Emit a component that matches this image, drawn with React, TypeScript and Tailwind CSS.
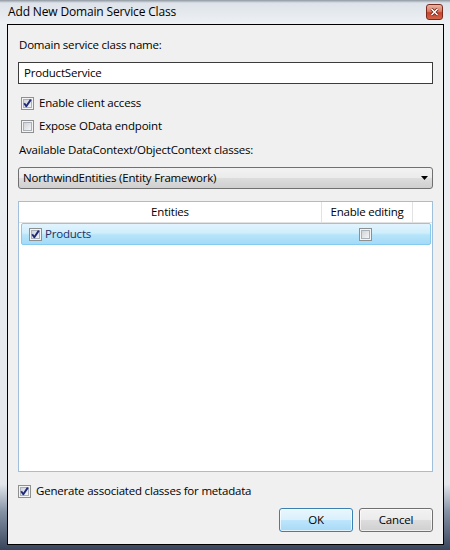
import React from 'react';

const font = { fontFamily: '"Segoe UI", "Open Sans", sans-serif' };
const txt = 'text-[11.5px] tracking-[-0.2px]';

function CheckBox({ checked }: { checked?: boolean }) {
  return (
    <svg width="13" height="13" viewBox="0 0 13 13" className="shrink-0">
      <defs>
        <linearGradient id="cbg" x1="0" y1="0" x2="1" y2="1">
          <stop offset="0" stopColor="#cdd1d7" />
          <stop offset="1" stopColor="#f7f7f7" />
        </linearGradient>
      </defs>
      <rect x="0.5" y="0.5" width="12" height="12" fill="#f4f4f4" stroke="#8e8f8f" />
      <rect x="2.5" y="2.5" width="8" height="8" fill="url(#cbg)" stroke="#aab0b8" />
      {checked && (
        <path d="M3.2 6.2 L5.3 9.3 L9.8 2.6" fill="none" stroke="#1f2a7a" strokeWidth="1.9" strokeLinejoin="round" />
      )}
    </svg>
  );
}

function CheckRow({ checked, label, className = '' }: { checked?: boolean; label: string; className?: string }) {
  return (
    <div className={`flex items-center h-4 ${className}`}>
      <CheckBox checked={checked} />
      <span className={`ml-[5px] ${txt} leading-4 text-black`}>{label}</span>
    </div>
  );
}

export default function App() {
  return (
    <div
      className="w-[450px] h-[550px] flex flex-col bg-[linear-gradient(to_bottom,#8e969f_0px,#dde3ea_3px,#eef1f4_24px,#e3e7ec_88%,#8592a5_93%,#37445b_100%)]"
      style={font}
    >
      {/* title bar */}
      <div className="h-[24px] flex items-center pl-2 pr-[7px] shrink-0">
        <span className="text-[12px] tracking-[-0.15px] text-black">Add New Domain Service Class</span>
        <div className="ml-auto w-[17px] h-[16px] rounded-[3px] border border-[#7a2a1d] bg-[linear-gradient(to_bottom,#eab3a3_0%,#dc7d66_45%,#c8432c_55%,#d0654a_100%)] flex items-center justify-center">
          <svg width="9" height="8" viewBox="0 0 9 8">
            <path d="M1.5 1 L7.5 7 M7.5 1 L1.5 7" stroke="#5a1a10" strokeWidth="3" />
            <path d="M1.5 1 L7.5 7 M7.5 1 L1.5 7" stroke="#ffffff" strokeWidth="1.6" />
          </svg>
        </div>
      </div>

      {/* client area */}
      <div className="ml-[7px] mr-[6px] mb-[5px] flex-1 border border-black bg-[#f0f0f0] flex flex-col px-[10px] pt-[12px] pb-[12px]">
        <div className={`${txt} leading-4 text-black ml-[1px]`}>Domain service class name:</div>

        <div className={`mt-[9px] h-[22px] border border-[#3c3c3c] bg-white flex items-center pl-[5px] ${txt} text-black`}>
          ProductService
        </div>

        <CheckRow checked label="Enable client access" className="mt-[11px] ml-[3px]" />
        <CheckRow label="Expose OData endpoint" className="mt-[7px] ml-[3px]" />

        <div className={`mt-[8px] ${txt} leading-4 text-black ml-[1px]`}>
          Available DataContext/ObjectContext classes:
        </div>

        <div className={`mt-[9px] h-[22px] rounded-[3px] border border-[#707070] bg-[linear-gradient(to_bottom,#f2f2f2_0%,#ebebeb_50%,#dddddd_50%,#cfcfcf_100%)] flex items-center pl-[4px] pr-[4px] ${txt} text-black`}>
          <span>NorthwindEntities (Entity Framework)</span>
          <svg className="ml-auto" width="7" height="4" viewBox="0 0 7 4">
            <path d="M0 0 H7 L3.5 4 Z" fill="#000" />
          </svg>
        </div>

        {/* grid */}
        <div className="mt-[12px] h-[271px] border border-[#9fbfdb] bg-white flex flex-col">
          <div className={`h-[21px] flex border-b border-[#e2e2e2] ${txt} text-black shrink-0`}>
            <div className="w-[303px] flex items-center justify-center border-r border-[#e2e2e2]">Entities</div>
            <div className="w-[91px] flex items-center justify-center border-r border-[#e2e2e2]">Enable editing</div>
            <div className="flex-1" />
          </div>
          <div className="ml-[2px] mr-[1px] h-[22px] rounded-[2px] border border-[#84cbef] bg-[linear-gradient(to_bottom,#e3f4fd_0%,#cdeefc_45%,#b5e4fa_55%,#a3dbf7_100%)] flex items-center">
            <div className="w-[300px] flex items-center pl-[7px]">
              <CheckBox checked />
              <span className={`ml-[3px] ${txt} text-[#1b2f6a]`}>Products</span>
            </div>
            <div className="w-[91px] flex items-center justify-center pr-[4px]">
              <CheckBox />
            </div>
          </div>
        </div>

        <CheckRow checked label="Generate associated classes for metadata" className="mt-[11px]" />

        <div className="mt-[9px] flex justify-end gap-[6px]">
          <div className={`w-[74px] h-[24px] rounded-[3px] border border-[#3c7fb1] bg-[linear-gradient(to_bottom,#eaf6fd_0%,#d9f0fc_50%,#bee6fd_50%,#a7d9f5_100%)] flex items-center justify-center ${txt} text-black shadow-[inset_0_0_0_1px_#ffffffaa]`}>
            OK
          </div>
          <div className={`w-[74px] h-[24px] rounded-[3px] border border-[#707070] bg-[linear-gradient(to_bottom,#f2f2f2_0%,#ebebeb_50%,#dddddd_50%,#cfcfcf_100%)] flex items-center justify-center ${txt} text-black shadow-[inset_0_0_0_1px_#ffffffaa]`}>
            Cancel
          </div>
        </div>
      </div>
    </div>
  );
}
